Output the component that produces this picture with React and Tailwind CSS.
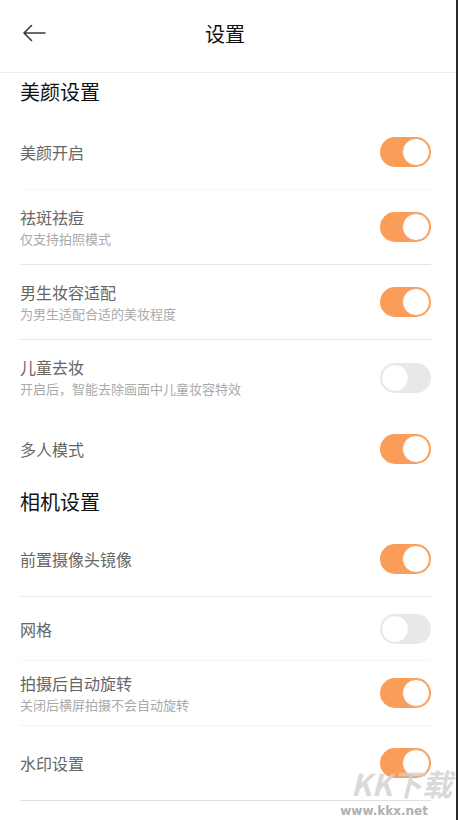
import React from 'react';

const font = { fontFamily: '"Noto Sans CJK SC", "Noto Sans", sans-serif' };

function Toggle({ on }) {
  return on ? (
    <div className="w-[51px] h-[30px] rounded-full bg-[#fa9d58] flex items-center justify-end p-px shrink-0">
      <div className="w-[28px] h-[28px] rounded-full bg-white border border-[#f7a565]" />
    </div>
  ) : (
    <div className="w-[51px] h-[30px] rounded-full bg-[#e8e8e8] flex items-center justify-start p-px shrink-0">
      <div className="w-[28px] h-[28px] rounded-full bg-white border border-[#e6e6e6]" />
    </div>
  );
}

function Row({ title, sub, on, h, line }) {
  return (
    <div className={`ml-5 mr-[25px] flex items-center justify-between ${h} ${line}`}>
      <div className="flex flex-col">
        <span className="text-[16px] leading-[22px] text-[#666]">{title}</span>
        {sub && <span className="text-[13px] leading-[20px] mt-px text-[#aaa]">{sub}</span>}
      </div>
      <Toggle on={on} />
    </div>
  );
}

export default function App() {
  return (
    <div className="relative w-[458px] h-[820px] bg-white border-r-2 border-[#2a2a2a] overflow-hidden" style={font}>
      {/* Header */}
      <div className="relative h-[73px] flex items-center justify-center border-b border-[#ececec]">
        <button className="absolute left-[22px] top-[23px] text-[#3a3a3a]" aria-label="back">
          <svg width="24" height="20" viewBox="0 0 24 20" fill="none" stroke="currentColor" strokeWidth={1.6} strokeLinecap="round" strokeLinejoin="round">
            <path d="M23 10H2M9.5 2.5L2 10l7.5 7.5" />
          </svg>
        </button>
        <span className="text-[20px] text-[#111] -mt-[5px] -ml-[6px]">设置</span>
      </div>

      {/* 美颜设置 */}
      <div className="h-[42px] flex items-center px-5 -mt-[2px] mb-[2px]">
        <span className="text-[20px] text-[#111]">美颜设置</span>
      </div>
      <Row title="美颜开启" on h="h-[75px]" line="border-b border-[#f6f6f6]" />
      <Row title="祛斑祛痘" sub="仅支持拍照模式" on h="h-[75px]" line="border-b border-[#e6e6e6]" />
      <Row title="男生妆容适配" sub="为男生适配合适的美妆程度" on h="h-[75px]" line="border-b border-[#e6e6e6]" />
      <Row title="儿童去妆" sub="开启后，智能去除画面中儿童妆容特效" on={false} h="h-[75px]" line="" />
      <Row title="多人模式" on h="h-[68px]" line="" />

      {/* 相机设置 */}
      <div className="h-[38px] flex items-center px-5">
        <span className="text-[20px] text-[#111]">相机设置</span>
      </div>
      <Row title="前置摄像头镜像" on h="h-[76px]" line="border-b border-[#ebebeb]" />
      <Row title="网格" on={false} h="h-[64px]" line="border-b border-[#f5f5f5]" />
      <Row title="拍摄后自动旋转" sub="关闭后横屏拍摄不会自动旋转" on h="h-[65px]" line="border-b border-[#f2f2f2]" />
      <Row title="水印设置" on h="h-[75px]" line="border-b border-[#e0e0e0]" />

      {/* watermark */}
      <div className="pointer-events-none absolute right-[4px] bottom-0 flex flex-col items-end">
        <span className="text-[30px] leading-[30px] font-bold italic text-[#cfcfcf]/80">KK下载</span>
        <span className="text-[12px] leading-[14px] font-bold text-[#b0b0b0] mr-[24px] mt-[6px] mb-[2px]" style={{ fontFamily: '"DejaVu Sans", sans-serif' }}>www.kkx.net</span>
      </div>
    </div>
  );
}
